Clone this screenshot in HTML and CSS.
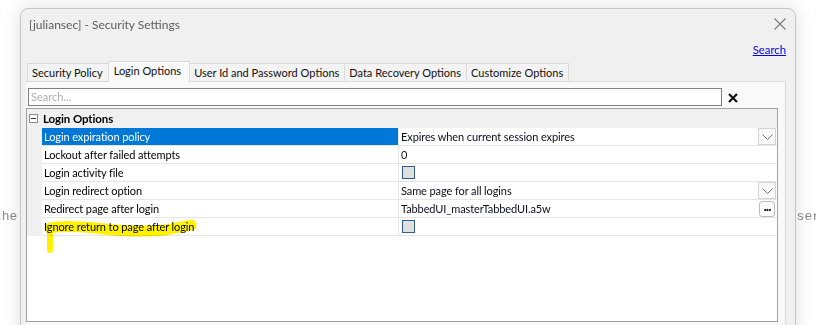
FILE: index.html
```html
<!DOCTYPE html>
<html>
<head>
<meta charset="utf-8">
<link rel="stylesheet" href="styles.css">
</head>
<body>
<div class="backdrop"><span class="bg-left">the</span><span class="bg-right">ser</span></div>

<div class="dialog">
  <div class="titlebar">
    <span class="title">[juliansec] - Security Settings</span>
    <svg class="close" width="12" height="12" viewBox="0 0 12 12"><path d="M0.5 0.5 L11.5 11.5 M11.5 0.5 L0.5 11.5" stroke="#7a7a7a" stroke-width="1.1" fill="none"/></svg>
  </div>
  <div class="linkrow"><a class="search-link">Search</a></div>
  <div class="tabs">
    <div class="tab">Security Policy</div>
    <div class="tab active">Login Options</div>
    <div class="tab">User Id and Password Options</div>
    <div class="tab">Data Recovery Options</div>
    <div class="tab">Customize Options</div>
  </div>
  <div class="panel">
    <div class="searchrow">
      <div class="searchbox">Search...</div>
      <svg class="clear" width="10" height="10" viewBox="0 0 10 10"><path d="M1 1 L9 9 M9 1 L1 9" stroke="#111" stroke-width="2.2" fill="none"/></svg>
    </div>
    <div class="grid">
      <div class="cat"><span class="toggle"></span><span class="cat-label">Login Options</span></div>
      <div class="row selected">
        <div class="gut"></div>
        <div class="name">Login expiration policy</div>
        <div class="val"><span class="vtext">Expires when current session expires</span><span class="btn dd"><svg width="11" height="6" viewBox="0 0 11 6"><path d="M0.5 0.5 L5.5 5.5 L10.5 0.5" stroke="#777" stroke-width="1" fill="none"/></svg></span></div>
      </div>
      <div class="row">
        <div class="gut"></div>
        <div class="name">Lockout after failed attempts</div>
        <div class="val"><span class="vtext">0</span></div>
      </div>
      <div class="row">
        <div class="gut"></div>
        <div class="name">Login activity file</div>
        <div class="val"><span class="check"></span></div>
      </div>
      <div class="row">
        <div class="gut"></div>
        <div class="name">Login redirect option</div>
        <div class="val"><span class="vtext">Same page for all logins</span><span class="btn dd"><svg width="11" height="6" viewBox="0 0 11 6"><path d="M0.5 0.5 L5.5 5.5 L10.5 0.5" stroke="#777" stroke-width="1" fill="none"/></svg></span></div>
      </div>
      <div class="row">
        <div class="gut"></div>
        <div class="name">Redirect page after login</div>
        <div class="val"><span class="vtext">TabbedUI_masterTabbedUI.a5w</span><span class="btn dots">&middot;&middot;&middot;</span></div>
      </div>
      <div class="row">
        <div class="gut"></div>
        <div class="name">Ignore return to page after login</div>
        <div class="val"><span class="check"></span></div>
      </div>
    </div>
  </div>
</div>

<svg class="marker" width="816" height="325" viewBox="0 0 816 325">
  <path d="M50 250 L50 232" stroke="#fff200" stroke-width="6" stroke-linecap="round" fill="none"/>
  <path d="M50 228 Q62 225 95 228 Q135 233 165 230 Q182 227 191 225" stroke="#fff200" stroke-width="11" stroke-linecap="round" fill="none"/>
</svg>
</body>
</html>
```

FILE: styles.css
```css
html, body {
  margin: 0;
  padding: 0;
}
body {
  width: 816px;
  height: 325px;
  overflow: hidden;
  position: relative;
  background: #ffffff;
  font-family: "Lato", "Open Sans", sans-serif;
}
.backdrop {
  padding-top: 209px;
  display: flex;
  justify-content: space-between;
  font-family: "Liberation Mono", "DejaVu Sans Mono", monospace;
  font-size: 13px;
  line-height: 15px;
  color: #8a8a8a;
}
.bg-left { margin-left: -6px; }
.bg-right { margin-right: -4px; }

.dialog {
  position: absolute;
  left: 20px;
  top: 8px;
  width: 776px;
  height: 330px;
  box-sizing: border-box;
  border: 1px solid #c4c4c4;
  border-radius: 8px 8px 0 0;
  background: #f0f0f0;
  box-shadow: 0 0 18px rgba(0, 0, 0, 0.13);
}
.titlebar {
  height: 30px;
  display: flex;
  align-items: center;
  justify-content: space-between;
  padding: 0 9px 0 8px;
}
.title {
  font-size: 12px;
  color: #5c5c5c;
}
.close { display: block; }

.linkrow {
  height: 21px;
  display: flex;
  align-items: center;
  justify-content: flex-end;
  padding-right: 9px;
}
.search-link {
  font-size: 11.5px;
  letter-spacing: -0.1px;
  color: #0000ff;
  text-decoration: underline;
}

.tabs {
  height: 21px;
  display: flex;
  align-items: flex-end;
  padding-left: 6px;
  position: relative;
  z-index: 2;
}
.tab {
  height: 18px;
  box-sizing: border-box;
  border: 1px solid #dadada;
  border-bottom: none;
  background: #f3f3f3;
  font-size: 11px;
  line-height: 17px;
  color: #111;
  padding: 0 5px 0 4px;
  margin-right: -1px;
}
.tab.active {
  height: 21px;
  margin-bottom: -1px;
  background: #f9f9f9;
  line-height: 18px;
  padding: 0 8px 0 5px;
  position: relative;
  z-index: 3;
}

.panel {
  margin: 0 9px 0 5px;
  height: 250px;
  box-sizing: border-box;
  border: 1px solid #dadada;
  border-left: none;
  background: #f9f9f9;
  padding-top: 6px;
}
.searchrow {
  display: flex;
  align-items: center;
  padding-left: 2px;
  height: 18px;
}
.searchbox {
  width: 694px;
  height: 18px;
  box-sizing: border-box;
  border: 1px solid #808080;
  background: #fff;
  font-size: 11px;
  line-height: 16px;
  padding-left: 2px;
  color: #b0b0b0;
}
.clear {
  margin-left: 6px;
  margin-top: 1px;
  display: block;
}

.grid {
  margin-top: 2px;
  width: 752px;
  height: 214px;
  box-sizing: border-box;
  border: 1px solid #a0a0a0;
  background: #ffffff;
  font-size: 11px;
  letter-spacing: -0.1px;
  color: #000;
}
.cat {
  height: 19px;
  background: #f0f0f0;
  display: flex;
  align-items: center;
  font-weight: 700;
  font-size: 11.5px;
}
.toggle {
  width: 9px;
  height: 9px;
  box-sizing: border-box;
  border: 1px solid #8c8c8c;
  background: #fff;
  margin-left: 2px;
  margin-right: 5px;
  position: relative;
}
.toggle::after {
  content: "";
  position: absolute;
  left: 1px;
  top: 3px;
  width: 5px;
  height: 1px;
  background: #333;
}
.cat-label { line-height: 18px; }

.row {
  height: 18px;
  display: grid;
  grid-template-columns: 15px 357px 1fr;
  line-height: 17px;
}
.gut { background: #f0f0f0; }
.name {
  padding-left: 2px;
  border-bottom: 1px solid #e6e6e6;
  border-right: 1px solid #e6e6e6;
  white-space: nowrap;
}
.row.selected .name {
  background: #0078d7;
  color: #fff;
}
.val {
  display: flex;
  align-items: flex-start;
  justify-content: space-between;
  padding-left: 2px;
  padding-right: 1px;
  border-bottom: 1px solid #e6e6e6;
  color: #0c0c1c;
}
.vtext { white-space: nowrap; }
.check {
  width: 13px;
  height: 13px;
  box-sizing: border-box;
  border: 1px solid #2f5d93;
  background: #dfdfdf;
  margin-top: 2px;
  margin-left: 1px;
}
.btn {
  box-sizing: border-box;
  display: flex;
  align-items: center;
  justify-content: center;
}
.dd {
  width: 18px;
  height: 17px;
  border: 1px solid #d2d2d2;
  background: #fafafa;
}
.dots {
  width: 16px;
  height: 16px;
  margin-top: 1px;
  margin-right: 1px;
  border: 1px solid #bcbcbc;
  border-radius: 3px;
  background: #fbfbfb;
  font-size: 12px;
  font-weight: 700;
  line-height: 12px;
  letter-spacing: -1px;
  color: #222;
}

.marker {
  position: absolute;
  left: 0;
  top: 0;
  pointer-events: none;
  mix-blend-mode: multiply;
}
```
